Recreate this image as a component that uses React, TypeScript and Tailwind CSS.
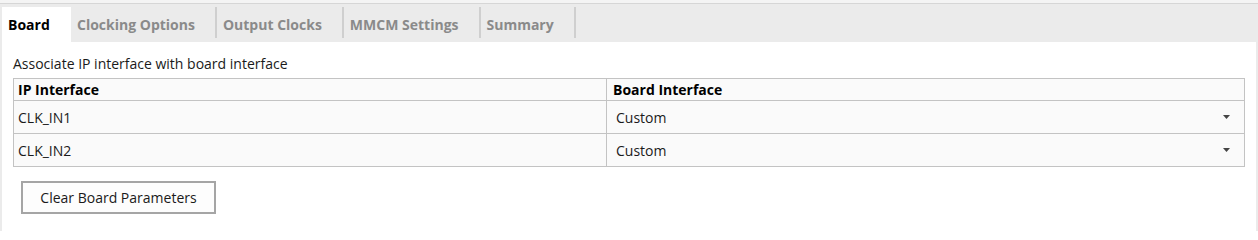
const tabs = [
  { label: "Board", active: true },
  { label: "Clocking Options" },
  { label: "Output Clocks" },
  { label: "MMCM Settings" },
  { label: "Summary" },
];

const rows = [
  { ip: "CLK_IN1", board: "Custom" },
  { ip: "CLK_IN2", board: "Custom" },
];

const Caret = () => (
  <svg width="7" height="4" viewBox="0 0 7 4" className="shrink-0">
    <polygon points="0,0 7,0 3.5,4" fill="#444" />
  </svg>
);

const App = () => {
  return (
    <div
      className="w-[1258px] h-[231px] bg-[#f4f4f4] flex flex-col overflow-hidden text-[#1a1a1a]"
      style={{ fontFamily: '"Open Sans", "Noto Sans", sans-serif' }}
    >
      <div className="h-[3px]" />
      <div className="flex-1 flex flex-col border-t border-[#d6d6d6] bg-[#ebebeb] px-[2px]">
        {/* Tabs */}
        <div className="h-[38px] flex items-end">
          {tabs.map(t =>
            t.active ? (
              <div key={t.label} className="h-[35px] w-[69px] bg-white flex items-center pl-[6px] text-[14px] font-bold text-black">
                {t.label}
              </div>
            ) : (
              <div key={t.label} className="h-[35px] flex items-start">
                <div className="h-[35px] flex items-center pl-[6px] pr-[20px] text-[14px] font-bold text-[#8a8a8a]">
                  {t.label}
                </div>
                <div className="w-[2px] h-[31px] bg-[#cfcfcf]" />
              </div>
            )
          )}
        </div>

        {/* Content */}
        <div className="flex-1 bg-white pl-[11px] pr-[11px]">
          <div className="mt-[12px] h-[20px] leading-[20px] text-[14px]">Associate IP interface with board interface</div>
          <div className="mt-[4px] w-[1232px] border border-[#c3c3c3] bg-[#fafafa] text-[14px]">
            <div className="flex h-[21px] items-center font-bold text-black">
              <div className="w-[593px] h-full flex items-center pl-[4px] border-r border-[#c3c3c3]">IP Interface</div>
              <div className="flex-1 pl-[6px]">Board Interface</div>
            </div>
            {rows.map(r => (
              <div key={r.ip} className="flex h-[33px] items-center border-t border-[#c3c3c3]">
                <div className="w-[593px] h-full flex items-center pl-[4px] border-r border-[#c3c3c3]">{r.ip}</div>
                <div className="flex-1 flex items-center justify-between pl-[9px] pr-[14px]">
                  <span>{r.board}</span>
                  <Caret />
                </div>
              </div>
            ))}
          </div>
          <button
            type="button"
            className="mt-[14px] ml-[8px] w-[195px] h-[33px] border-2 border-[#a5a5a5] bg-[#fdfdfd] text-[14px] text-[#1a1a1a]"
          >
            Clear Board Parameters
          </button>
        </div>
      </div>
    </div>
  );
};

export default App;
